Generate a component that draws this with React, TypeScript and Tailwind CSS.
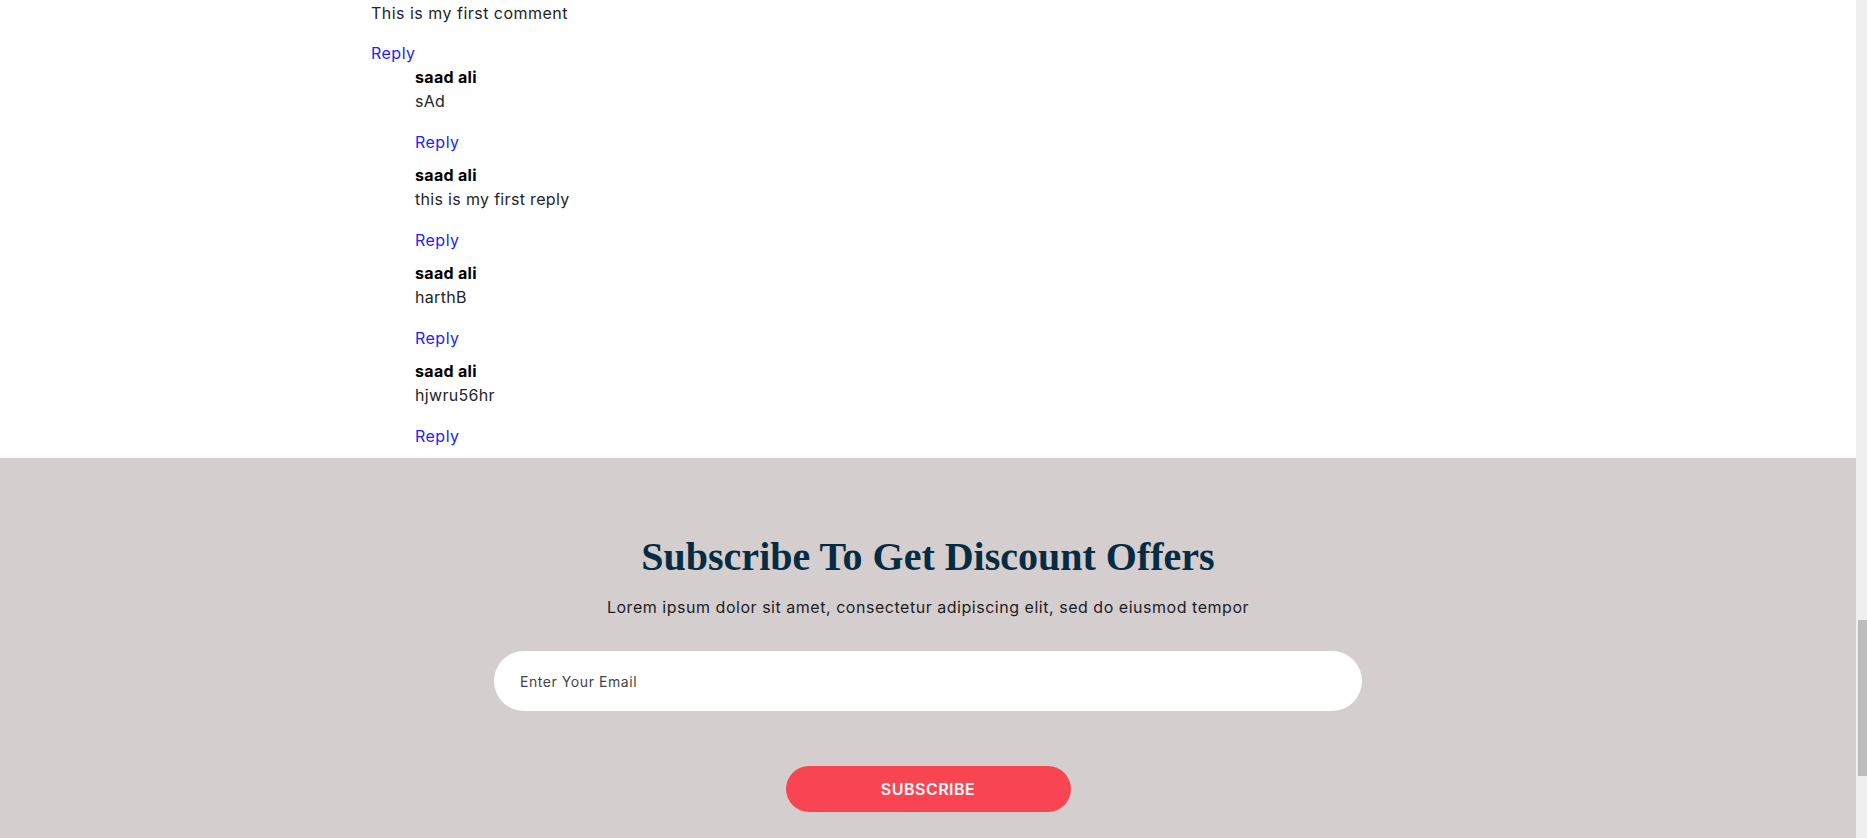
const replies = [
  { id: 1, author: "saad ali", text: "sAd" },
  { id: 2, author: "saad ali", text: "this is my first reply" },
  { id: 3, author: "saad ali", text: "harthB" },
  { id: 4, author: "saad ali", text: "hjwru56hr" },
];

const body = "font-['Inter','Open_Sans',sans-serif]";

function ReplyLink({ className = "" }: { className?: string }) {
  return (
    <button
      type="button"
      className={`block text-left text-base leading-6 tracking-[0.03em] text-[#2323f5] ${className}`}
    >
      Reply
    </button>
  );
}

export default function App() {
  return (
    <div className={`flex h-[838px] w-full overflow-hidden bg-white ${body}`}>
      <div className="flex min-w-0 flex-1 flex-col">
        {/* comment thread */}
        <section className="bg-white pb-[1px] pl-[371px] pt-[1px]">
          <p className="mb-[16px] text-base leading-6 tracking-[0.03em] text-[#212529]">
            This is my first comment
          </p>
          <ReplyLink />
          <div className="pl-[44px]">
            {replies.map((reply) => (
              <div key={reply.id} className="pb-[9px]">
                <p className="text-base font-bold leading-6 tracking-[0.02em] text-black">{reply.author}</p>
                <p className="text-base leading-6 tracking-[0.02em] text-[#212529]">{reply.text}</p>
                <ReplyLink className="mt-[17px]" />
              </div>
            ))}
          </div>
        </section>

        {/* newsletter */}
        <section className="flex flex-1 flex-col items-center bg-[#d4cecf] pt-[75px]">
          <h2 className="font-['Liberation_Serif','Times_New_Roman',serif] text-[40px] font-bold leading-[48px] text-[#062c43]">
            Subscribe To Get Discount Offers
          </h2>
          <p className="mt-[14px] text-base leading-6 tracking-[0.033em] text-[#1d1d24]">
            Lorem ipsum dolor sit amet, consectetur adipiscing elit, sed do eiusmod tempor
          </p>
          <input
            type="email"
            placeholder="Enter Your Email"
            className="mt-[32px] h-[60px] w-[868px] rounded-full bg-white px-[26px] text-sm tracking-[0.04em] text-[#333] outline-none placeholder:text-[#444]"
          />
          <button
            type="button"
            className="mt-[55px] h-[46px] w-[285px] rounded-full bg-[#f94452] text-base font-semibold uppercase tracking-[0.03em] text-white"
          >
            Subscribe
          </button>
        </section>
      </div>

      {/* scrollbar */}
      <div className="flex w-[11px] shrink-0 flex-col bg-[#f0f0f0] pl-[2px] pt-[620px]">
        <div className="h-[156px] bg-[#bdbdbd]" />
      </div>
    </div>
  );
}
